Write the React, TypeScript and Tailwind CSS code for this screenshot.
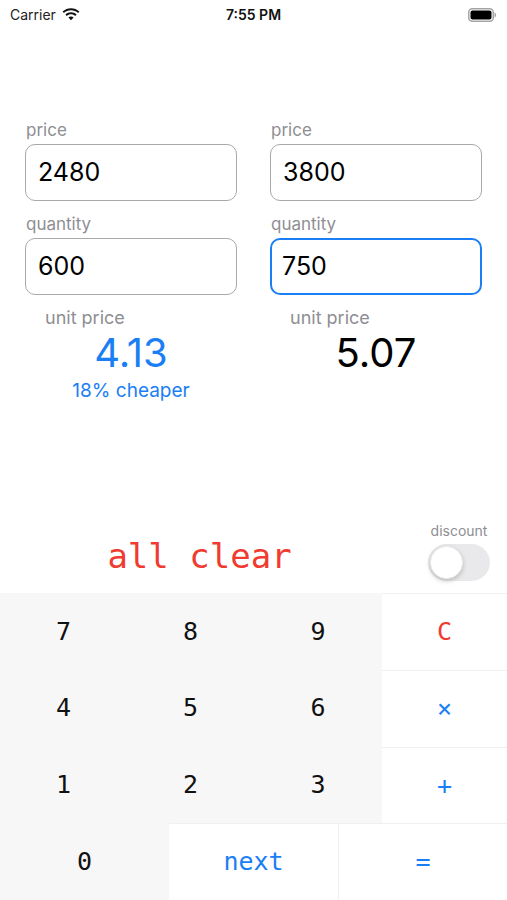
import React from "react";

const sans = { fontFamily: "Inter, 'Liberation Sans', sans-serif" };
const mono = { fontFamily: "'DejaVu Sans Mono', 'Liberation Mono', monospace" };

const Wifi = () => (
  <svg width="18" height="14" viewBox="0 0 18 14" className="ml-1.5">
    <path d="M9 2.2c2.7 0 5.2 1 7.1 2.8l1.3-1.4C15.1 1.4 12.2.2 9 .2S2.9 1.4.6 3.6l1.3 1.4C3.8 3.2 6.3 2.2 9 2.2z" fill="#111" />
    <path d="M9 6.2c1.6 0 3.1.6 4.3 1.7l1.3-1.4C13.1 5 11.1 4.2 9 4.2S4.9 5 3.4 6.5l1.3 1.4C5.9 6.8 7.4 6.2 9 6.2z" fill="#111" />
    <path d="M9 8.4c-1 0-1.9.4-2.6 1L9 12.2l2.6-2.8c-.7-.6-1.6-1-2.6-1z" fill="#111" />
  </svg>
);

const Battery = () => (
  <svg width="29" height="14" viewBox="0 0 29 14">
    <rect x="0.75" y="0.75" width="24.5" height="12.5" rx="3.5" fill="none" stroke="#a5a5a5" strokeWidth="1.5" />
    <rect x="2.5" y="2.5" width="21" height="9" rx="2" fill="#000" />
    <path d="M26.5 4.5c1 .3 1.6 1.3 1.6 2.5s-.6 2.2-1.6 2.5z" fill="#a5a5a5" />
  </svg>
);

const Field = ({ label, value, active }: { label: string; value: string; active?: boolean }) => (
  <div className="flex flex-col">
    <span className="text-[17px] leading-[20px] text-[#8e8e93] pl-[1px]">{label}</span>
    <div
      className={
        active
          ? "mt-[4px] h-[57px] rounded-[10px] border-[2.5px] border-[#1a7ef5] flex items-center pl-[10px]"
          : "mt-[4px] h-[57px] rounded-[10px] border border-[#a9a9a9] flex items-center pl-[12px]"
      }
    >
      <span className="text-[25px] text-black">{value}</span>
    </div>
  </div>
);

const Column = ({
  price,
  qty,
  unit,
  unitColor,
  note,
  active,
}: {
  price: string;
  qty: string;
  unit: string;
  unitColor: string;
  note?: string;
  active?: boolean;
}) => (
  <div className="flex-1 flex flex-col">
    <div className="flex flex-col gap-[13px]">
      <Field label="price" value={price} />
      <Field label="quantity" value={qty} active={active} />
    </div>
    <span className="mt-[12px] pl-[20px] text-[18px] leading-[22px] text-[#8e8e93]">unit price</span>
    <div className={"text-center text-[40px] leading-[48px] " + unitColor}>{unit}</div>
    {note && <div className="mt-[2px] text-center text-[19px] leading-[24px] text-[#1a7ef5]">{note}</div>}
  </div>
);

type Key = { label: string; tone: "digit" | "red" | "blue" };

const topKeys: Key[][] = [
  [
    { label: "7", tone: "digit" },
    { label: "8", tone: "digit" },
    { label: "9", tone: "digit" },
    { label: "C", tone: "red" },
  ],
  [
    { label: "4", tone: "digit" },
    { label: "5", tone: "digit" },
    { label: "6", tone: "digit" },
    { label: "×", tone: "blue" },
  ],
  [
    { label: "1", tone: "digit" },
    { label: "2", tone: "digit" },
    { label: "3", tone: "digit" },
    { label: "+", tone: "blue" },
  ],
];

const KeyCell = ({ k }: { k: Key }) => {
  const base = "flex items-center justify-center text-[25px] ";
  if (k.tone === "digit") return <div className={base + "bg-[#f7f7f7] text-[#111]"}>{k.label}</div>;
  return (
    <div className={base + "bg-white border-t border-[#f0f0f0] " + (k.tone === "red" ? "text-[#ef3b30]" : "text-[#1a7ef5]")}>
      {k.label}
    </div>
  );
};

export default function App() {
  return (
    <div className="w-[507px] h-[900px] bg-white flex flex-col overflow-hidden" style={sans}>
      {/* status bar */}
      <div className="h-[28px] flex items-center justify-between px-[10px] pt-[1px]">
        <div className="flex items-center w-[120px]">
          <span className="text-[14px] text-[#222]">Carrier</span>
          <Wifi />
        </div>
        <span className="text-[14px] font-semibold text-[#111]">7:55 PM</span>
        <div className="w-[120px] flex justify-end pr-[0px]">
          <Battery />
        </div>
      </div>

      {/* inputs */}
      <div className="mt-[92px] flex gap-[33px] px-[25px]">
        <Column price="2480" qty="600" unit="4.13" unitColor="text-[#1a7ef5]" note="18% cheaper" />
        <Column price="3800" qty="750" unit="5.07" unitColor="text-black" active />
      </div>

      <div className="flex-1" />

      {/* clear row */}
      <div className="h-[72px] flex items-start relative">
        <div className="flex-1 flex justify-center pt-[13px] pr-[112px] pl-[4px]">
          <span className="text-[34px] leading-[44px] text-[#ef3b30]" style={mono}>all clear</span>
        </div>
        <div className="absolute right-[17px] top-[2px] flex flex-col items-center">
          <span className="text-[14px] leading-[16px] text-[#8e8e93]">discount</span>
          <div className="mt-[5px] w-[62px] h-[37px] rounded-full bg-[#e9e9eb] p-[2px] flex">
            <div className="w-[33px] h-[33px] rounded-full bg-white shadow-[0_2px_5px_rgba(0,0,0,0.2)] border border-[#ededed]" />
          </div>
        </div>
      </div>

      {/* keypad */}
      <div className="h-[307px] flex flex-col" style={mono}>
        <div className="flex-[3] grid grid-cols-[127px_127px_128px_1fr] grid-rows-3">
          {topKeys.flat().map((k) => (
            <KeyCell key={k.label} k={k} />
          ))}
        </div>
        <div className="flex-1 grid grid-cols-3">
          <div className="flex items-center justify-center text-[25px] bg-[#f7f7f7] text-[#111]">0</div>
          <div className="flex items-center justify-center text-[25px] bg-white text-[#1a7ef5] border-t border-[#f0f0f0]">next</div>
          <div className="flex items-center justify-center text-[25px] bg-white text-[#1a7ef5] border-t border-l border-[#f0f0f0]">=</div>
        </div>
      </div>
    </div>
  );
}
